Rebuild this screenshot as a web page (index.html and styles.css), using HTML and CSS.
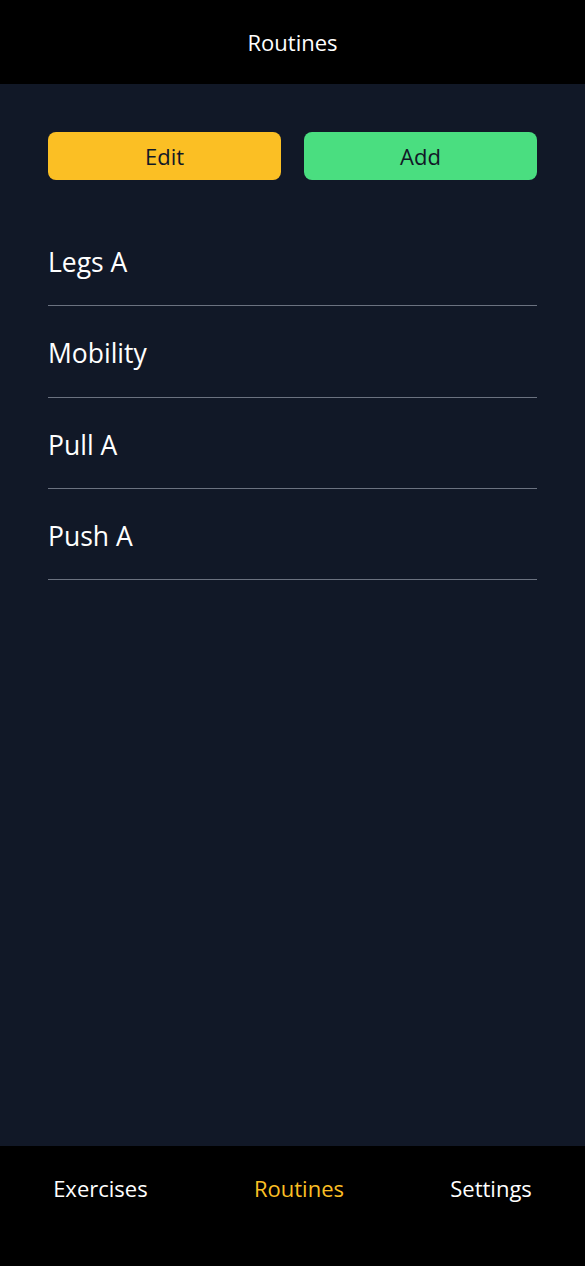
FILE: index.html
```html
<!DOCTYPE html>
<html lang="en">
<head>
<meta charset="utf-8">
<meta name="viewport" content="width=device-width, initial-scale=1">
<title>Routines</title>
<link rel="stylesheet" href="styles.css">
</head>
<body>
<div class="app">
  <header class="topbar">Routines</header>
  <main class="content">
    <div class="actions">
      <button class="btn btn-edit">Edit</button>
      <button class="btn btn-add">Add</button>
    </div>
    <ul class="routine-list">
      <li class="routine">Legs A</li>
      <li class="routine">Mobility</li>
      <li class="routine">Pull A</li>
      <li class="routine">Push A</li>
    </ul>
  </main>
  <nav class="tabbar">
    <span class="tab">Exercises</span>
    <span class="tab tab-active">Routines</span>
    <span class="tab">Settings</span>
  </nav>
</div>
</body>
</html>
```

FILE: styles.css
```css
* { box-sizing: border-box; }
html, body { margin: 0; padding: 0; height: 100%; }
body {
  background: #111827;
  font-family: "Open Sans", "Noto Sans", sans-serif;
  color: #ffffff;
}
.app {
  display: flex;
  flex-direction: column;
  height: 1266px;
}
.topbar {
  height: 84px;
  background: #000000;
  display: flex;
  align-items: center;
  justify-content: center;
  font-size: 22px;
}
.content {
  flex: 1;
  padding: 48px 48px 0;
  background: #111827;
}
.actions {
  display: grid;
  grid-template-columns: 1fr 1fr;
  gap: 23px;
}
.btn {
  height: 48px;
  border: none;
  border-radius: 8px;
  font-family: inherit;
  font-size: 22px;
  color: #111827;
  cursor: pointer;
}
.btn-edit { background: #fbbf24; }
.btn-add { background: #4ade80; }
.routine-list {
  list-style: none;
  margin: 35px 0 0;
  padding: 0;
}
.routine {
  height: 91.3px;
  display: flex;
  align-items: center;
  padding-top: 4px;
  font-size: 26.5px;
  border-bottom: 1px solid #6b7280;
}
.tabbar {
  height: 120px;
  background: #000000;
  display: flex;
  justify-content: space-around;
  align-items: flex-start;
  padding-top: 27px;
}
.tab {
  font-size: 22px;
}
.tab-active { color: #fbbf24; }
```
